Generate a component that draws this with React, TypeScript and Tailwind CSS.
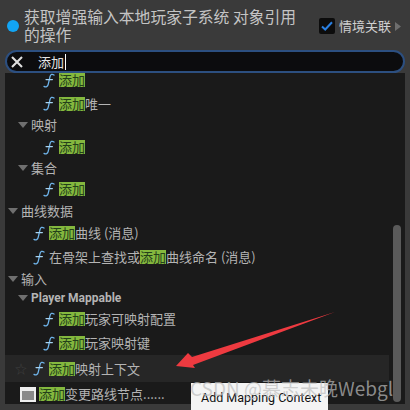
function FnIcon() {
  return (
    <svg width="12" height="15" viewBox="0 0 12 15" fill="none" className="shrink-0">
      <path d="M11 2C9.2.7 7.6 1.2 7 3.6L5.2 11.4C4.7 13.6 3 14.4 1 13.4" stroke="#6fb4ea" strokeWidth="1.3" strokeLinecap="round" />
      <path d="M3 6.6h6.4" stroke="#a4d2f2" strokeWidth="1.2" strokeLinecap="round" />
    </svg>
  );
}

function Hit() {
  return <span className="inline-block h-[14px] bg-[#84b83e] leading-[14px] text-[#24401a]">添加</span>;
}

function Group({ label, className }: { label: string; className: string }) {
  return (
    <div className={`flex items-center ${className}`}>
      <svg width="10" height="6" viewBox="0 0 10 6" className="mr-[3px] shrink-0">
        <path d="M0 0h10L5 6z" fill="#6f6f6f" />
      </svg>
      <span>{label}</span>
    </div>
  );
}

function Fn({ before, after, className }: { before?: string; after?: string; className: string }) {
  return (
    <div className={`flex items-center ${className}`}>
      <FnIcon />
      <span className="ml-[4px] whitespace-nowrap text-[#b4b4b4]">
        {before}
        <Hit />
        {after}
      </span>
    </div>
  );
}

export default function App() {
  return (
    <div
      className="relative h-[410px] w-[410px] overflow-hidden bg-[#3a3a3a] text-[13px] text-[#b4b4b4]"
      style={{ fontFamily: '"Noto Sans CJK SC", "Noto Sans", sans-serif' }}
    >
      <header className="flex h-[50px] items-center pl-[7px] pt-[2px]">
        <span className="h-[12px] w-[12px] shrink-0 rounded-full bg-[#12a5f4]" />
        <h1 className="ml-[5px] w-[285px] text-[15.8px] font-normal leading-[18px] text-[#c4c4c4]">
          获取增强输入本地玩家子系统 对象引用的操作
        </h1>
        <div className="ml-[10px] flex items-center">
          <span className="flex h-[16px] w-[16px] items-center justify-center rounded-[2px] bg-[#0c0c0c]">
            <svg width="12" height="10" viewBox="0 0 12 10" fill="none">
              <path d="M1 5.5 4.2 8.5 11 1.2" stroke="#2a7fe0" strokeWidth="2" />
            </svg>
          </span>
          <span className="ml-[4px] whitespace-nowrap text-[13px] text-[#d0d0d0]">情境关联</span>
          <svg width="6" height="9" viewBox="0 0 6 9" className="ml-[4px]">
            <path d="M0 0l6 4.5L0 9z" fill="#6e6e6e" />
          </svg>
        </div>
      </header>

      <div className="mx-[5px] flex h-[23px] w-[400px] items-center rounded-full border-2 border-[#2c4f80] bg-[#0c0c0e] pl-[3px]">
        <svg width="14" height="12" viewBox="0 0 14 12" fill="none" className="shrink-0">
          <path d="M2 1l10 10M12 1 2 11" stroke="#e0e0e0" strokeWidth="2.1" />
        </svg>
        <span className="ml-[14px] border-r border-white pr-[1px] leading-[16px] text-[#e4e4e4]">添加</span>
      </div>

      <div className="mx-[5px] h-[331px] w-[400px] overflow-hidden bg-[#1a1a1a] text-[13px]">
        <Fn className="-mt-[5px] h-[24px] pl-[38px]" />
        <Fn className="h-[23px] pl-[38px]" after="唯一" />
        <Group label="映射" className="h-[20px] pl-[13px]" />
        <Fn className="h-[24px] pl-[38px]" />
        <Group label="集合" className="h-[18px] pl-[13px]" />
        <Fn className="h-[24px] pl-[38px]" />
        <Group label="曲线数据" className="h-[20px] pl-[3px]" />
        <Fn className="h-[24px] pl-[28px]" after="曲线 (消息)" />
        <Fn className="h-[24px] pl-[28px]" before="在骨架上查找或" after="曲线命名 (消息)" />
        <Group label="输入" className="h-[20px] pl-[3px]" />
        <div style={{ fontFamily: "Roboto, sans-serif" }}>
          <Group label="Player Mappable" className="h-[18px] pl-[13px] text-[12px] font-bold" />
        </div>
        <Fn className="h-[24px] pl-[38px]" after="玩家可映射配置" />
        <Fn className="h-[24px] pl-[38px]" after="玩家映射键" />
        <div className="flex h-[27px] w-[384px] items-center bg-[#262626] pl-[10px]">
          <span className="mr-[7px] w-[11px] text-[12px] leading-none text-[#3f3f3f]">☆</span>
          <Fn className="h-full" after="映射上下文" />
        </div>
        <div className="flex h-[24px] items-center pl-[15px]">
          <span className="h-[15px] w-[16px] border-2 border-t-[4px] border-[#eeeeee] bg-[#8a8a8a]" />
          <span className="ml-[3px] whitespace-nowrap text-[#b4b4b4]">
            <Hit />
            变更路线节点......
          </span>
        </div>
      </div>

      {/* scrollbar sits over the list */}
      <div className="absolute left-[393px] top-[225px] h-[177px] w-[8px] rounded-[4px] bg-[#5a5a5a]" />

      {/* red annotation arrow */}
      <svg width="170" height="65" viewBox="0 0 170 65" className="absolute left-[170px] top-[308px]">
        <path d="M165 4 22 49l-4-4L6 58l19 2-2-3z" fill="#ee3a40" />
      </svg>

      <div
        className="absolute left-[191px] top-[383px] h-[27px] w-[137px] bg-[#f4f4f4] pl-[10px] pt-[6px] text-[12.5px] leading-[18px] text-[#111111]"
        style={{ fontFamily: "Roboto, sans-serif" }}
      >
        Add Mapping Context
      </div>

      <div className="absolute left-[190px] top-[375px] whitespace-nowrap text-[19px] leading-[26px] text-[#bdbdbd]/70">
        CSDN @慕志未晚Webgl
      </div>
    </div>
  );
}
